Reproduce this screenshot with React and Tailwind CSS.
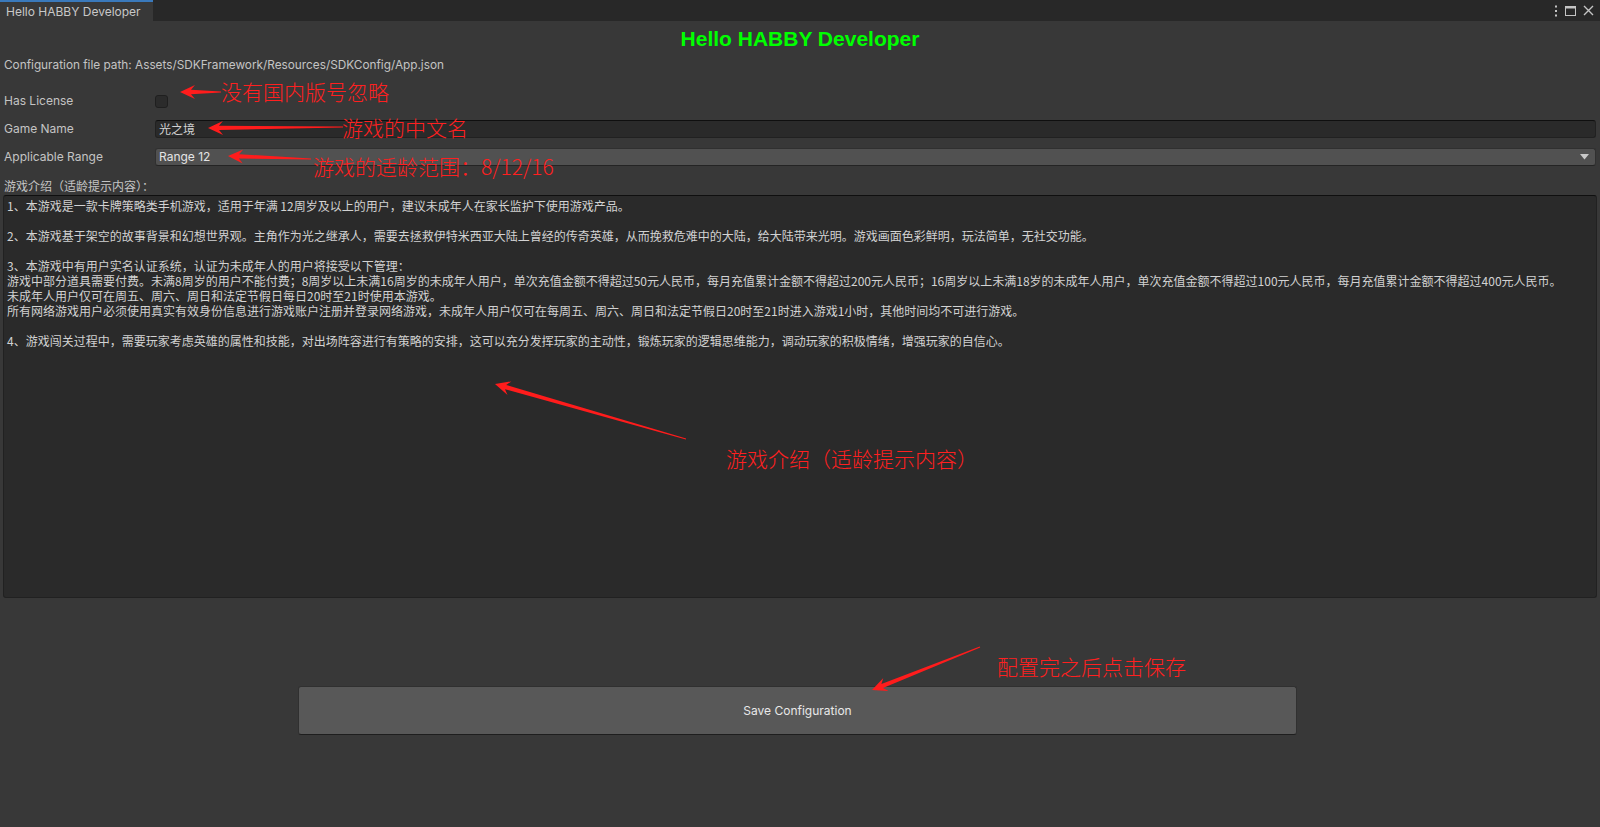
import React from "react"

const desc = [
  "1、本游戏是一款卡牌策略类手机游戏，适用于年满 12周岁及以上的用户，建议未成年人在家长监护下使用游戏产品。",
  "",
  "2、本游戏基于架空的故事背景和幻想世界观。主角作为光之继承人，需要去拯救伊特米西亚大陆上曾经的传奇英雄，从而挽救危难中的大陆，给大陆带来光明。游戏画面色彩鲜明，玩法简单，无社交功能。",
  "",
  "3、本游戏中有用户实名认证系统，认证为未成年人的用户将接受以下管理：",
  "游戏中部分道具需要付费。未满8周岁的用户不能付费；8周岁以上未满16周岁的未成年人用户，单次充值金额不得超过50元人民币，每月充值累计金额不得超过200元人民币；16周岁以上未满18岁的未成年人用户，单次充值金额不得超过100元人民币，每月充值累计金额不得超过400元人民币。",
  "未成年人用户仅可在周五、周六、周日和法定节假日每日20时至21时使用本游戏。",
  "所有网络游戏用户必须使用真实有效身份信息进行游戏账户注册并登录网络游戏，未成年人用户仅可在每周五、周六、周日和法定节假日20时至21时进入游戏1小时，其他时间均不可进行游戏。",
  "",
  "4、游戏闯关过程中，需要玩家考虑英雄的属性和技能，对出场阵容进行有策略的安排，这可以充分发挥玩家的主动性，锻炼玩家的逻辑思维能力，调动玩家的积极情绪，增强玩家的自信心。",
]

// red arrows drawn over the screenshot: [tailX, tailY, headX, headY]
const arrows = [
  [221, 92, 180, 92],
  [343, 127, 208, 128],
  [311, 159, 228, 156],
  [686, 439, 495, 384],
  [980, 647, 872, 690],
]

const notes = [
  { text: "没有国内版号忽略", x: 221, y: 81 },
  { text: "游戏的中文名", x: 342, y: 117 },
  { text: "游戏的适龄范围：8/12/16", x: 313, y: 156 },
  { text: "游戏介绍（适龄提示内容）", x: 726, y: 448 },
  { text: "配置完之后点击保存", x: 997, y: 656 },
]

function arrowPoints([x1, y1, x2, y2]) {
  const dx = x2 - x1
  const dy = y2 - y1
  const len = Math.hypot(dx, dy)
  const ux = dx / len
  const uy = dy / len
  const nx = -uy
  const ny = ux
  const H = 15
  const W = 7
  const w = 2.2
  const bx = x2 - ux * H
  const by = y2 - uy * H
  const nb = x2 - ux * (H - 4)
  const nby = y2 - uy * (H - 4)
  const p = (x, y) => `${x.toFixed(1)},${y.toFixed(1)}`
  return [
    p(x1 + nx * 0.5, y1 + ny * 0.5),
    p(nb + nx * w, nby + ny * w),
    p(bx + nx * W, by + ny * W),
    p(x2, y2),
    p(bx - nx * W, by - ny * W),
    p(nb - nx * w, nby - ny * w),
    p(x1 - nx * 0.5, y1 - ny * 0.5),
  ].join(" ")
}

function Row({ label, children }) {
  return (
    <div className="flex h-[18px] items-center">
      <div className="w-[155px] shrink-0 pl-[4px] text-[12px] text-[#c4c4c4]">{label}</div>
      <div className="flex flex-1 items-center pr-[4px]">{children}</div>
    </div>
  )
}

export default function App() {
  return (
    <div
      className="relative flex h-[827px] w-[1600px] flex-col overflow-hidden bg-[#383838]"
      style={{ fontFamily: "Inter, 'Noto Sans CJK SC', sans-serif" }}
    >
      {/* tab strip */}
      <div className="flex h-[21px] shrink-0 items-stretch bg-[#282828]">
        <div className="flex w-[153px] items-center border-t-2 border-[#3a79bb] bg-[#383838] pl-[6px] text-[12px] text-[#c8c8c8]">
          Hello HABBY Developer
        </div>
        <div className="flex-1" />
        <div className="flex items-center gap-[7px] pr-[6px] text-[#c4c4c4]">
          <svg width="4" height="12" viewBox="0 0 4 12">
            <rect x="1" y="0.5" width="2" height="2" fill="currentColor" />
            <rect x="1" y="5" width="2" height="2" fill="currentColor" />
            <rect x="1" y="9.5" width="2" height="2" fill="currentColor" />
          </svg>
          <svg width="11" height="10" viewBox="0 0 11 10">
            <rect x="0.5" y="0.5" width="10" height="9" fill="none" stroke="currentColor" />
            <rect x="0.5" y="0.5" width="10" height="2" fill="currentColor" />
          </svg>
          <svg width="11" height="11" viewBox="0 0 11 11">
            <path d="M1 1 L10 10 M10 1 L1 10" stroke="currentColor" strokeWidth="1.4" />
          </svg>
        </div>
      </div>

      <div
        className="flex h-[36px] items-center justify-center text-[21px] font-bold text-[#00ff00]"
        style={{ fontFamily: "'Liberation Sans', Arial, sans-serif" }}
      >
        Hello HABBY Developer
      </div>

      <div className="flex h-[18px] items-center pl-[4px] text-[11.8px] text-[#c4c4c4]">
        Configuration file path: Assets/SDKFramework/Resources/SDKConfig/App.json
      </div>

      <div className="mt-[17px] flex flex-col gap-[10px]">
        <Row label="Has License">
          <div className="h-[13px] w-[13px] rounded-[3px] border border-[#1f1f1f] bg-[#2b2b2b]" />
        </Row>
        <Row label="Game Name">
          <div
            className="flex h-[18px] flex-1 items-center rounded-[3px] border border-[#212121] border-t-[#0f0f0f] bg-[#2a2a2a] pl-[3px] text-[12px] text-[#d2d2d2]"
            style={{ fontFamily: "'Noto Sans CJK SC', sans-serif" }}
          >
            光之境
          </div>
        </Row>
        <Row label="Applicable Range">
          <div className="flex h-[18px] flex-1 items-center justify-between rounded-[3px] border border-[#303030] border-b-[#242424] bg-[#515151] pl-[3px] pr-[6px] text-[12px] text-[#e4e4e4]">
            <span>Range 12</span>
            <svg width="9" height="6" viewBox="0 0 9 6">
              <path d="M0 0 H9 L4.5 5.5 Z" fill="#c8c8c8" />
            </svg>
          </div>
        </Row>
      </div>

      <div
        className="mt-[12px] flex h-[16px] items-center pl-[4px] text-[12px] text-[#c4c4c4]"
        style={{ fontFamily: "'Noto Sans CJK SC', sans-serif" }}
      >
        游戏介绍（适龄提示内容）：
      </div>

      <div className="mx-[3px] mt-[1px] h-[403px] rounded-[3px] border border-[#212121] border-t-[#0f0f0f] bg-[#2a2a2a] pl-[3px] pt-[2px]">
        <div
          className="text-[12px] leading-[15px] text-[#d2d2d2]"
          style={{ fontFamily: "'Noto Sans CJK SC', sans-serif" }}
        >
          {desc.map((line, i) => (
            <div key={i} className="h-[15px] whitespace-nowrap">
              {line}
            </div>
          ))}
        </div>
      </div>

      <div className="mt-[88px] pl-[298px]">
        <div className="flex h-[49px] w-[999px] items-center justify-center rounded-[3px] border border-[#303030] border-b-[#1e1e1e] bg-[#585858] text-[12px] text-[#e8e8e8]">
          Save Configuration
        </div>
      </div>

      {/* annotations */}
      <svg className="pointer-events-none absolute left-0 top-0" width="1600" height="827">
        {arrows.map((a, i) => (
          <polygon key={i} points={arrowPoints(a)} fill="#ff1c1c" />
        ))}
      </svg>
      {notes.map((n) => (
        <div
          key={n.text}
          className="pointer-events-none absolute whitespace-nowrap text-[21px] font-light leading-[21px] text-[#ff2020]"
          style={{ left: n.x, top: n.y, fontFamily: "'Noto Sans CJK SC', sans-serif" }}
        >
          {n.text}
        </div>
      ))}
    </div>
  )
}
